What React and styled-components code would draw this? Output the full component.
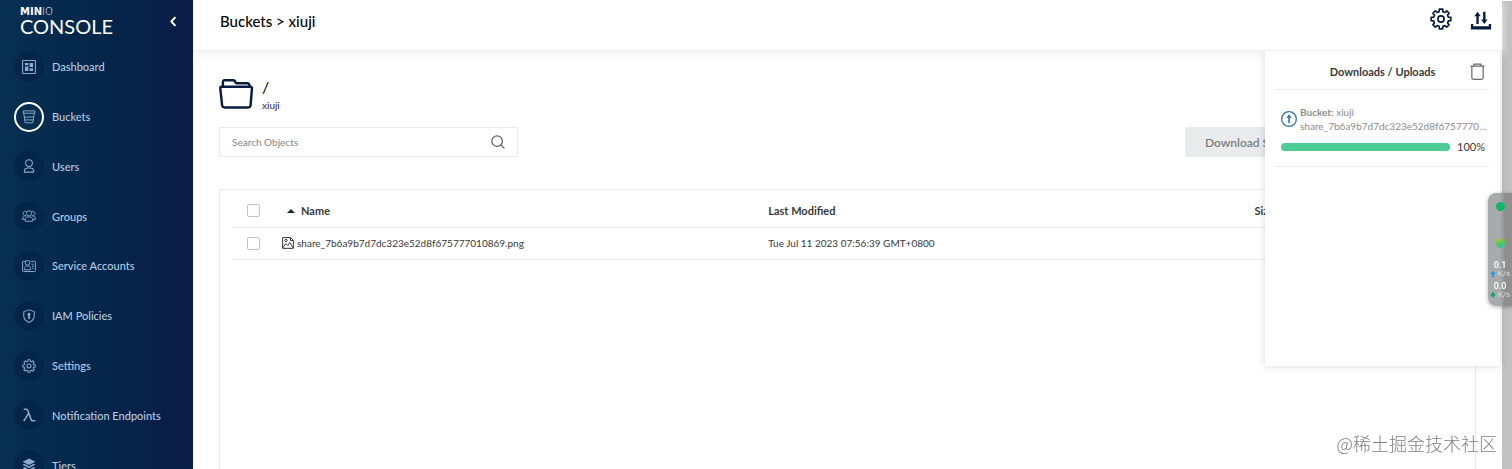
import React from "react";
import styled, { createGlobalStyle, css } from "styled-components";

const colours = {
  navy: "#081c42",
  text: "#393939",
  muted: "#8c8c8c",
  line: "#eaeaea",
  menuText: "#b4cbe0",
  menuIcon: "#8badcb",
  green: "#4ccb92",
};

const GlobalStyle = createGlobalStyle`
  * {
    box-sizing: border-box;
  }
  body {
    margin: 0;
    background: #fff;
    color: ${colours.text};
    font-family: Lato, sans-serif;
    font-size: 11px;
  }
  button, input {
    font-family: inherit;
  }
`;

const Page = styled.div`
  display: flex;
  height: 100vh;
  overflow: hidden;
`;

const Sidebar = styled.nav`
  z-index: 1;
  flex: 0 0 193px;
  overflow: hidden;
  background: linear-gradient(90deg, #073052 0%, #05294d 35%, #081c46 100%);
`;

const SidebarTop = styled.div`
  display: flex;
  align-items: center;
  justify-content: space-between;
  height: 42px;
  padding: 0 13px 0 20px;
`;

const Logo = styled.div`
  display: flex;
  flex-direction: column;
  height: 26px;
  color: #fff;
`;

const LogoTop = styled.span`
  font-family: "DejaVu Sans", sans-serif;
  font-size: 10px;
  font-weight: 700;
  line-height: 8px;
  span {
    font-weight: 300;
  }
`;

const LogoName = styled.span`
  font-size: 20px;
  line-height: 20px;
`;

const IconButton = styled.button`
  display: flex;
  padding: 0;
  border: 0;
  background: none;
  color: ${(props) => props.$colour || colours.navy};
  cursor: pointer;
`;

const Menu = styled.ul`
  display: grid;
  grid-auto-rows: 1fr;
  height: 448px;
  margin: 0;
  padding: 0;
  list-style: none;
`;

const MenuLink = styled.a`
  display: flex;
  align-items: center;
  gap: 8px;
  height: 100%;
  padding-left: 14px;
  color: ${colours.menuText};
  font-weight: 500;
  text-decoration: none;
`;

const MenuIcon = styled.span`
  display: flex;
  align-items: center;
  justify-content: center;
  width: 30px;
  height: 30px;
  border-radius: 50%;
  background: #04254a;
  color: ${colours.menuIcon};
  ${(props) =>
    props.$active &&
    css`
      border: 2px solid #fff;
      background: none;
    `}
`;

const Main = styled.main`
  position: relative;
  display: flex;
  flex: 1;
  flex-direction: column;
  min-width: 0;
`;

const Header = styled.header`
  display: flex;
  justify-content: space-between;
  height: 51px;
  padding: 8px 10px 0 27px;
  border-bottom: 1px solid #f0f0f0;
  box-shadow: 0 3px 8px #f2f2f2;
`;

const Title = styled.h1`
  margin: 0;
  color: #000;
  font-size: 15px;
  font-weight: 500;
  line-height: 26px;
`;

const HeaderActions = styled.div`
  display: flex;
  gap: 18px;
`;

const Content = styled.section`
  display: flex;
  flex: 1;
  flex-direction: column;
  padding: 26px 26px 0;
`;

const PathRow = styled.div`
  display: flex;
  gap: 8px;
  height: 50px;
`;

const PathText = styled.div`
  display: flex;
  flex-direction: column;
  a {
    color: #3c1453;
    font-size: 10px;
    line-height: 16px;
    text-decoration: none;
  }
`;

const PathName = styled.span`
  color: #000;
  font-size: 16px;
  line-height: 20px;
`;

const Toolbar = styled.div`
  display: flex;
  justify-content: space-between;
`;

const SearchBox = styled.label`
  display: flex;
  align-items: center;
  width: 299px;
  height: 30px;
  padding: 0 12px;
  border: 1px solid ${colours.line};
  color: #606060;
  input {
    flex: 1;
    min-width: 0;
    padding: 0;
    border: 0;
    outline: 0;
    font-size: 10px;
    font-weight: 500;
  }
  input::placeholder {
    color: ${colours.muted};
    opacity: 1;
  }
`;

const DownloadButton = styled.button`
  width: 291px;
  height: 30px;
  padding: 0 20px;
  border: 0;
  border-radius: 2px;
  background: #e9ebec;
  color: #7c7c7c;
  font-size: 12px;
  font-weight: 600;
  text-align: left;
`;

const TableBox = styled.div`
  flex: 1;
  margin-top: 32px;
  padding: 5px 12px;
  border: 1px solid ${colours.line};
  border-bottom: 0;
`;

const Table = styled.table`
  width: 100%;
  border-collapse: collapse;
  table-layout: fixed;
`;

const Cell = styled.td`
  width: ${(props) => props.$width || "auto"};
  height: 32px;
  padding: 0;
  border-bottom: 1px solid ${colours.line};
  font-size: ${(props) => (props.as === "th" ? "11px" : "10px")};
  font-weight: ${(props) => (props.as === "th" ? 700 : 400)};
  text-align: left;
  white-space: nowrap;
`;

const CellInner = styled.span`
  display: flex;
  align-items: center;
  gap: ${(props) => props.$gap || "3px"};
  padding-left: ${(props) => props.$indent || "0"};
`;

const Checkbox = styled.input`
  display: block;
  width: 13px;
  height: 13px;
  margin: 0 0 0 15px;
  border: 1px solid #c4c4c4;
  border-radius: 2px;
  background: #fff;
  appearance: none;
`;

const Panel = styled.aside`
  position: absolute;
  top: 51px;
  right: 2px;
  width: 235px;
  height: 315px;
  padding: 0 11px;
  background: #fff;
  box-shadow: 0 0 8px rgba(0, 0, 0, 0.15);
  clip-path: inset(0 -10px -10px -10px);
`;

const PanelHeader = styled.div`
  display: grid;
  grid-template-columns: 20px 1fr 20px;
  align-items: center;
  height: 39px;
  padding-top: 3px;
  border-bottom: 1px solid ${colours.line};
  h2 {
    grid-column: 2;
    margin: 0;
    font-size: 11px;
    font-weight: 700;
    text-align: center;
  }
`;

const Transfer = styled.div`
  padding: 15px 2px 12px 5px;
  border-bottom: 1px solid ${colours.line};
`;

const TransferInfo = styled.div`
  display: flex;
  align-items: center;
  gap: 3px;
  color: #3271a5;
`;

const TransferText = styled.div`
  min-width: 0;
  color: ${colours.muted};
  font-size: 10px;
  line-height: 14px;
  div {
    overflow: hidden;
    text-overflow: ellipsis;
    white-space: nowrap;
  }
`;

const TransferProgress = styled.div`
  display: flex;
  align-items: center;
  gap: 7px;
  margin-top: 6px;
  line-height: 15px;
`;

const Track = styled.div`
  flex: 0 0 169px;
  height: 8px;
  overflow: hidden;
  border-radius: 4px;
  background: #eee;
`;

const Bar = styled.div`
  height: 100%;
  background: ${colours.green};
`;

const Scrollbar = styled.div`
  flex: 0 0 10px;
  margin-top: 1px;
  background: #c1c1c1;
`;

// Floating network monitor that sits over the right edge of the window
const Monitor = styled.div`
  position: fixed;
  top: 193px;
  right: 0;
  z-index: 2;
  display: flex;
  flex-direction: column;
  align-items: center;
  width: 24px;
  height: 113px;
  padding-top: 9px;
  border-radius: 8px 0 0 8px;
  background: linear-gradient(90deg, #a9aaab 0%, #a9aaab 50%, #8f8f8f 70%);
  box-shadow: 0 1px 4px rgba(0, 0, 0, 0.3);
  color: #fff;
`;

const Dot = styled.span`
  width: 9px;
  height: 9px;
  margin-bottom: 28px;
  border-radius: ${(props) => props.$radius || "50%"};
  background: ${(props) => props.$fill};
`;

const Rate = styled.div`
  height: 21px;
  font-family: Roboto, sans-serif;
  font-size: 9px;
  font-weight: 500;
  line-height: 9px;
  text-align: center;
  small {
    display: flex;
    align-items: center;
    gap: 2px;
    color: #dedede;
    font-size: 8px;
    font-weight: 400;
    line-height: 8px;
  }
`;

const Rates = styled.div`
  margin-top: -15px;
`;

const Watermark = styled.div`
  position: fixed;
  right: 15px;
  bottom: 13px;
  color: #808080;
  font-family: "Noto Sans CJK SC", sans-serif;
  font-size: 18px;
  font-weight: 300;
  line-height: 26px;
`;

const Svg = ({ size = 14, box = 24, width = 1.8, children, ...rest }) => (
  <svg
    width={size}
    height={size}
    viewBox={`0 0 ${box} ${box}`}
    fill="none"
    stroke="currentColor"
    strokeWidth={width}
    strokeLinejoin="round"
    aria-hidden="true"
    {...rest}
  >
    {children}
  </svg>
);

const gearPath = () => {
  const points = [];
  for (let i = 0; i < 8; i++) {
    const middle = (i * Math.PI) / 4;
    [
      [-0.25, 8.3],
      [-0.17, 10.9],
      [0.17, 10.9],
      [0.25, 8.3],
    ].forEach(([offset, radius]) => {
      const angle = middle + offset;
      const x = 12 + radius * Math.sin(angle);
      const y = 12 - radius * Math.cos(angle);
      points.push(`${x.toFixed(2)} ${y.toFixed(2)}`);
    });
  }
  return `M${points.join("L")}Z`;
};

const GearIcon = (props) => (
  <Svg {...props}>
    <path d={gearPath()} />
    <circle cx="12" cy="12" r="3.4" />
  </Svg>
);

const DashboardIcon = () => (
  <Svg>
    <rect x="1" y="1" width="22" height="22" rx="1" />
    <path
      d="M5 5h6v4H5zM13 5h6v7h-6zM5 11h6v8H5zM13 14h6v5h-6z"
      fill="currentColor"
      stroke="none"
    />
  </Svg>
);

const BucketIcon = () => (
  <Svg width={1.6}>
    <path d="M2 1.5h20v4H2zM3 5.5l2.5 16.5h13L21 5.5M4 12h16M5 17h14" />
  </Svg>
);

const UserIcon = () => (
  <Svg>
    <circle cx="12" cy="7" r="5.8" />
    <path d="M4 22.5c-1-8 5-7 8-7s9-1 8 7z" />
  </Svg>
);

const GroupsIcon = () => (
  <Svg width={1.6}>
    <circle cx="12" cy="7.5" r="4.6" />
    <path d="M5.5 21c-.5-7 3-7.5 6.5-7.5s7 .5 6.5 7.5z" />
    <path d="M7.5 4.5a3.8 3.8 0 1 0-1 7C2.5 12 .8 14 1 18h4M16.5 4.5a3.8 3.8 0 1 1 1 7c4 .5 5.7 2.5 5.5 6.5h-4" />
  </Svg>
);

const AccountIcon = () => (
  <Svg width={1.7}>
    <path d="M6 4H2.5C1.5 4 1 4.5 1 5.5V20c0 1 .5 1.5 1.5 1.5h19c1 0 1.500-.5 1.500-1.500V5.500c0-1-.5-1.500-1.500-1.500H15" />
    <circle cx="9.5" cy="6.5" r="4" />
    <path d="M4.500 18.500c-.5-6 2-6.500 5-6.500s5.500.5 5 6.500zM16.500 9H20M17 12.500h3M17 16h3" />
  </Svg>
);

const PolicyIcon = () => (
  <Svg>
    <path d="M12 1.5l9 3V12c0 5-3.5 8.5-9 11-5.500-2.500-9-6-9-11V4.500z" />
    <circle cx="12" cy="9" r="1.8" fill="currentColor" />
    <path d="M12 9v8" strokeWidth="3" />
  </Svg>
);

const LambdaIcon = () => (
  <Svg width={2.6}>
    <path d="M3 2h4.500c1.500 0 2 1 2.500 2.500l5.500 15c.6 1.600 1.300 2.300 2.700 2.300H23M11.500 9L3 22.500" />
  </Svg>
);

const TiersIcon = () => (
  <Svg fill="currentColor" stroke="none">
    <path d="M12 1l11 5.500L12 12 1 6.500z" />
    <path d="M4 10l8 4 8-4 3 1.500L12 17 1 11.500zM4 15.500l8 4 8-4 3 1.500-11 5.500L1 17z" />
  </Svg>
);

const ChevronIcon = () => (
  <Svg size={13} width={3.6}>
    <path d="M15.5 4L8 12l7.5 8" />
  </Svg>
);

const TransferIcon = () => (
  <Svg size={22} fill="currentColor" stroke="none">
    <path d="M1 17.5h2.5v2.500h17v-2.500H23v6H1zM6.900 17.500V9H4.700l3.500-5 3.500 5H9.500v8.500zM14.300 4h2.600v8.500h2.200l-3.500 5-3.500-5h2.200z" />
  </Svg>
);

const FolderIcon = () => (
  <Svg size={35} box={36} width={2.5}>
    <path d="M2.500 10h30c1 0 1.500.7 1.400 1.700L32.500 29c-.2 1.500-1 2.300-2.500 2.300H5.700c-1.500 0-2.300-.8-2.500-2.300L1.300 11.700C1.200 10.700 1.600 10 2.500 10z" />
    <path d="M4 10V5.500C4 4 4.500 3.300 6 3.300h8.500c1.500 0 2 .7 2.300 2 .2.900.6 1.200 1.500 1.200H29c1.700 0 2.500 1 2.500 3.500" />
  </Svg>
);

const SearchIcon = () => (
  <Svg size={14} width={2.2}>
    <circle cx="10.5" cy="10.5" r="9" />
    <path d="M17 17l6 6" />
  </Svg>
);

const ImageIcon = () => (
  <Svg size={12} width={2}>
    <path d="M1.200 1.200h16l5.500 5.500v16H1.200zM17 1.500V7h5.500M1.500 22l6-9 4 4 4-6 7 11" />
    <circle cx="8" cy="7" r="2.3" />
  </Svg>
);

const SortIcon = () => (
  <svg width="8" height="4" viewBox="0 0 8 4" aria-hidden="true">
    <path d="M0 4l4-4 4 4z" fill="#222" />
  </svg>
);

const TrashIcon = () => (
  <Svg size={17} width={1.7}>
    <path d="M2 4.500h20M7 4.500V1.500h10v3M4 4.500V20c0 2 1 3 3 3h10c2 0 3-1 3-3V4.500" />
  </Svg>
);

const UploadIcon = () => (
  <Svg size={16} width={1.9} style={{ flexShrink: 0 }}>
    <circle cx="12" cy="12" r="11" />
    <path d="M12 18V7" strokeWidth="2.4" />
    <path d="M12 5l4 5H8z" fill="currentColor" stroke="none" />
  </Svg>
);

const ArrowIcon = ({ colour, down }) => (
  <svg width="6" height="6" viewBox="0 0 6 6" aria-hidden="true">
    <path
      d={down ? "M2 0h2v2h2L3 6 0 2h2z" : "M3 0l3 3H4v3H2V3H0z"}
      fill={colour}
    />
  </svg>
);

const menuItems = [
  { name: "Dashboard", icon: <DashboardIcon /> },
  { name: "Buckets", icon: <BucketIcon />, active: true },
  { name: "Users", icon: <UserIcon /> },
  { name: "Groups", icon: <GroupsIcon /> },
  { name: "Service Accounts", icon: <AccountIcon /> },
  { name: "IAM Policies", icon: <PolicyIcon /> },
  { name: "Settings", icon: <GearIcon /> },
  { name: "Notification Endpoints", icon: <LambdaIcon /> },
  { name: "Tiers", icon: <TiersIcon /> },
];

const objects = [
  {
    name: "share_7b6a9b7d7dc323e52d8f675777010869.png",
    modified: "Tue Jul 11 2023 07:56:39 GMT+0800",
  },
];

const transfer = { bucket: "xiuji", file: objects[0].name, percent: 100 };

const SideMenu = () => (
  <Sidebar>
    <SidebarTop>
      <Logo>
        <LogoTop>
          MIN<span>IO</span>
        </LogoTop>
        <LogoName>CONSOLE</LogoName>
      </Logo>
      <IconButton $colour="#fff" aria-label="Collapse menu">
        <ChevronIcon />
      </IconButton>
    </SidebarTop>
    <Menu>
      {menuItems.map((item) => (
        <li key={item.name}>
          <MenuLink href="#">
            <MenuIcon $active={item.active}>{item.icon}</MenuIcon>
            {item.name}
          </MenuLink>
        </li>
      ))}
    </Menu>
  </Sidebar>
);

const ObjectsTable = () => (
  <TableBox>
    <Table>
      <thead>
        <tr>
          <Cell as="th" $width="50px">
            <Checkbox type="checkbox" aria-label="Select all" />
          </Cell>
          <Cell as="th" $width="39.5%">
            <CellInner $gap="6px" $indent="5px">
              <SortIcon />
              Name
            </CellInner>
          </Cell>
          <Cell as="th" $width="39.5%">
            Last Modified
          </Cell>
          <Cell as="th">Size</Cell>
        </tr>
      </thead>
      <tbody>
        {objects.map((item) => (
          <tr key={item.name}>
            <Cell>
              <Checkbox type="checkbox" aria-label={item.name} />
            </Cell>
            <Cell>
              <CellInner>
                <ImageIcon />
                {item.name}
              </CellInner>
            </Cell>
            <Cell>{item.modified}</Cell>
            <Cell />
          </tr>
        ))}
      </tbody>
    </Table>
  </TableBox>
);

const TransfersPanel = () => (
  <Panel>
    <PanelHeader>
      <h2>Downloads / Uploads</h2>
      <IconButton $colour="#6b6b6b" aria-label="Clear list">
        <TrashIcon />
      </IconButton>
    </PanelHeader>
    <Transfer>
      <TransferInfo>
        <UploadIcon />
        <TransferText>
          <div>
            <b>Bucket:</b> {transfer.bucket}
          </div>
          <div>{transfer.file}</div>
        </TransferText>
      </TransferInfo>
      <TransferProgress>
        <Track>
          <Bar style={{ width: `${transfer.percent}%` }} />
        </Track>
        {transfer.percent}%
      </TransferProgress>
    </Transfer>
  </Panel>
);

const NetworkMonitor = () => (
  <Monitor>
    <Dot $fill="#0fb56b" />
    <Dot
      $fill="linear-gradient(160deg, #a5c72c, #4fc46a 55%, #2fc0c9)"
      $radius="2px 2px 5px 5px"
    />
    <Rates>
      <Rate>
        0.1
        <small>
          <ArrowIcon colour="#1f9ae8" />
          K/s
        </small>
      </Rate>
      <Rate>
        0.0
        <small>
          <ArrowIcon colour="#14a86c" down />
          K/s
        </small>
      </Rate>
    </Rates>
  </Monitor>
);

const App = () => {
  return (
    <Page>
      <GlobalStyle />
      <SideMenu />
      <Main>
        <Header>
          <Title>Buckets &gt; xiuji</Title>
          <HeaderActions>
            <IconButton aria-label="Settings">
              <GearIcon size={22} width={1.8} />
            </IconButton>
            <IconButton aria-label="Transfers">
              <TransferIcon />
            </IconButton>
          </HeaderActions>
        </Header>
        <Content>
          <PathRow>
            <IconButton as="span">
              <FolderIcon />
            </IconButton>
            <PathText>
              <PathName>/</PathName>
              <a href="#">xiuji</a>
            </PathText>
          </PathRow>
          <Toolbar>
            <SearchBox>
              <input placeholder="Search Objects" aria-label="Search Objects" />
              <SearchIcon />
            </SearchBox>
            <DownloadButton>Download Selected</DownloadButton>
          </Toolbar>
          <ObjectsTable />
        </Content>
        <TransfersPanel />
      </Main>
      <Scrollbar />
      <NetworkMonitor />
      <Watermark>@稀土掘金技术社区</Watermark>
    </Page>
  );
};

export default App;
